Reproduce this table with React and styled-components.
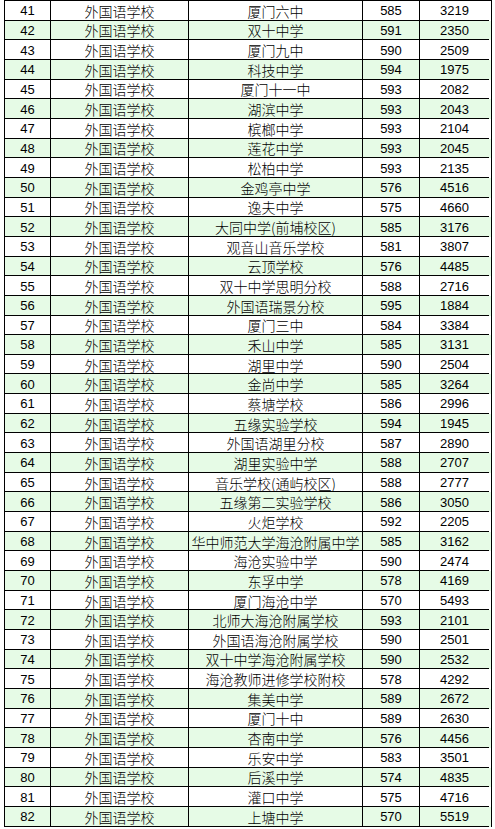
import React from "react";
import styled, { createGlobalStyle } from "styled-components";

const Global = createGlobalStyle`
  html, body {
    margin: 0;
    padding: 0;
    background: #fff;
  }
`;

const Page = styled.div`
  padding-left: 4px;
  width: 495px;
  height: 829px;
  box-sizing: border-box;
  overflow: hidden;
  background: #fff;
`;

const Table = styled.div`
  width: 487px;
  border-top: 1px solid #000;
  border-right: 1px solid #000;
  box-sizing: content-box;
`;

const Row = styled.div`
  display: grid;
  grid-template-columns: 46px 138px 174px 57px 70px;
  height: calc(826px / 42);
  background: ${(p) => (p.$alt ? "#e6fbe6" : "#ffffff")};
`;

const Cell = styled.div`
  box-sizing: border-box;
  border-left: 1px solid #000;
  border-bottom: 1px solid #000;
  display: flex;
  align-items: center;
  justify-content: center;
  white-space: nowrap;
  overflow: hidden;
  color: #000;
  font-family: ${(p) =>
    p.$num
      ? '"Liberation Sans", Arial, sans-serif'
      : '"Noto Sans CJK SC", "Noto Sans", sans-serif'};
  font-size: ${(p) => (p.$num ? "13px" : "14px")};
  font-weight: ${(p) => (p.$num ? 400 : 300)};
  line-height: 1;
  padding-top: 1px;
`;

const rows = [
  [41, "厦门六中", 585, 3219],
  [42, "双十中学", 591, 2350],
  [43, "厦门九中", 590, 2509],
  [44, "科技中学", 594, 1975],
  [45, "厦门十一中", 593, 2082],
  [46, "湖滨中学", 593, 2043],
  [47, "槟榔中学", 593, 2104],
  [48, "莲花中学", 593, 2045],
  [49, "松柏中学", 593, 2135],
  [50, "金鸡亭中学", 576, 4516],
  [51, "逸夫中学", 575, 4660],
  [52, "大同中学(前埔校区)", 585, 3176],
  [53, "观音山音乐学校", 581, 3807],
  [54, "云顶学校", 576, 4485],
  [55, "双十中学思明分校", 588, 2716],
  [56, "外国语瑞景分校", 595, 1884],
  [57, "厦门三中", 584, 3384],
  [58, "禾山中学", 585, 3131],
  [59, "湖里中学", 590, 2504],
  [60, "金尚中学", 585, 3264],
  [61, "蔡塘学校", 586, 2996],
  [62, "五缘实验学校", 594, 1945],
  [63, "外国语湖里分校", 587, 2890],
  [64, "湖里实验中学", 588, 2707],
  [65, "音乐学校(通屿校区)", 588, 2777],
  [66, "五缘第二实验学校", 586, 3050],
  [67, "火炬学校", 592, 2205],
  [68, "华中师范大学海沧附属中学", 585, 3162],
  [69, "海沧实验中学", 590, 2474],
  [70, "东孚中学", 578, 4169],
  [71, "厦门海沧中学", 570, 5493],
  [72, "北师大海沧附属学校", 593, 2101],
  [73, "外国语海沧附属学校", 590, 2501],
  [74, "双十中学海沧附属学校", 590, 2532],
  [75, "海沧教师进修学校附校", 578, 4292],
  [76, "集美中学", 589, 2672],
  [77, "厦门十中", 589, 2630],
  [78, "杏南中学", 576, 4456],
  [79, "乐安中学", 583, 3501],
  [80, "后溪中学", 574, 4835],
  [81, "灌口中学", 575, 4716],
  [82, "上塘中学", 570, 5519],
];

export default function App() {
  return (
    <Page>
      <Global />
      <Table>
        {rows.map(([n, school, score, rank]) => (
          <Row key={n} $alt={n % 2 === 0}>
            <Cell $num>{n}</Cell>
            <Cell>外国语学校</Cell>
            <Cell>{school}</Cell>
            <Cell $num>{score}</Cell>
            <Cell $num>{rank}</Cell>
          </Row>
        ))}
      </Table>
    </Page>
  );
}
